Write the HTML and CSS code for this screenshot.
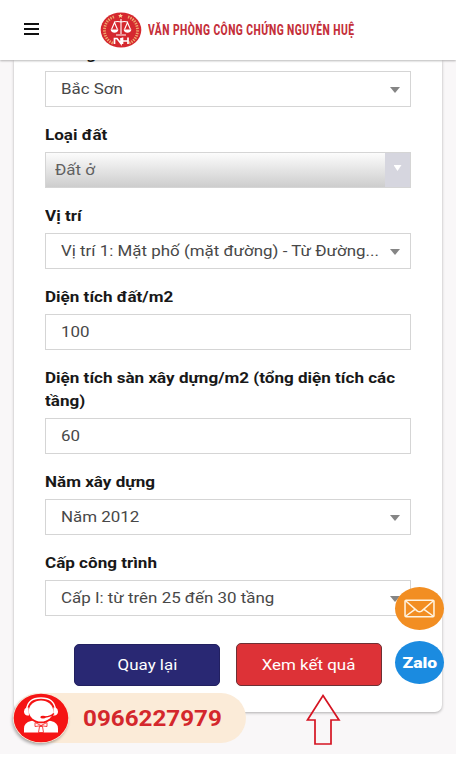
FILE: index.html
```html
<!DOCTYPE html>
<html lang="vi">
<head>
<meta charset="utf-8">
<meta name="viewport" content="width=device-width, initial-scale=1">
<title>Văn phòng công chứng Nguyễn Huệ</title>
<link rel="stylesheet" href="styles.css">
</head>
<body>
<header class="topbar">
  <div class="menu"><i></i><i></i><i></i></div>
  <svg class="logo" viewBox="0 0 42 36">
    <ellipse cx="21" cy="18" rx="20.3" ry="17.6" fill="#d5282f"/>
    <path d="M14 4.800C1.500 9 1.500 27 13 31.200M28 4.800C40.500 9 40.500 27 29 31.200" fill="none" stroke="#eda56b" stroke-width="2.800" stroke-dasharray="1.400 1.100"/>
    <path d="M20.500 1.700l.8 1.400h1.600l-1.200 1.100.4 1.600-1.600-.9-1.600.9.400-1.600-1.200-1.100h1.600z" fill="#ffd09a"/>
    <g fill="none" stroke="#fff" stroke-width="1.100">
      <path d="M21 7v15M16 23h10M14 10q4-1 7 0q3-1 7 0M14.500 10.500l-3 7M14.500 10.500l3 7M27.500 10.500l-3 7M27.500 10.500l3 7"/>
    </g>
    <path d="M10.500 17.500h8q-1 3.300-4 3.300t-4-3.300zM23.500 17.500h8q-1 3.300-4 3.300t-4-3.300z" fill="#fff"/>
    <path d="M14.500 32v-5.500h2.500l4 5v-5.500M22.500 25.500v6.500M22.500 29h5.500M28 25.500v6.500" fill="none" stroke="#fff" stroke-width="1.700"/>
  </svg>
  <div class="brand"><span>VĂN PHÒNG CÔNG CHỨNG NGUYỄN HUỆ</span></div>
</header>
<main class="page">
  <form class="card">
    <div class="label first"><span>Đường</span></div>
    <div class="box"><span>Bắc Sơn</span><b class="caret"></b></div>
    <div class="label"><span>Loại đất</span></div>
    <div class="box native"><span>Đất ở</span><em><b class="caret"></b></em></div>
    <div class="label"><span>Vị trí</span></div>
    <div class="box"><span>Vị trí 1: Mặt phố (mặt đường) - Từ Đường...</span><b class="caret"></b></div>
    <div class="label"><span>Diện tích đất/m2</span></div>
    <div class="box"><span>100</span></div>
    <div class="label"><span>Diện tích sàn xây dựng/m2 (tổng diện tích các<br>tầng)</span></div>
    <div class="box"><span>60</span></div>
    <div class="label"><span>Năm xây dựng</span></div>
    <div class="box"><span>Năm 2012</span><b class="caret"></b></div>
    <div class="label"><span>Cấp công trình</span></div>
    <div class="box"><span>Cấp I: từ trên 25 đến 30 tầng</span><b class="caret"></b></div>
    <div class="actions">
      <div class="btn back"><span>Quay lại</span></div>
      <div class="btn submit"><span>Xem kết quả</span></div>
    </div>
  </form>
</main>
<div class="phone">
  <svg viewBox="0 0 56 50">
    <ellipse cx="28" cy="25" rx="28" ry="25" fill="#fbe5d6"/>
    <ellipse cx="28" cy="25" rx="27.300" ry="24.300" fill="#f51414"/>
    <path d="M11 39.500v-4q0-6 7-7.500l5-1h10l5 1q7 1.500 7 7.500v4z" fill="#fff"/>
    <ellipse cx="28" cy="18" rx="14" ry="12.300" fill="#f51414"/>
    <path d="M13.500 17q1-12 14.500-12t14.500 12" fill="none" stroke="#fff" stroke-width="1.300"/>
    <ellipse cx="28" cy="18" rx="12.200" ry="10.600" fill="#fff"/>
    <path d="M15.500 14.500h-2q-2.500 1-2.500 4t3 4h2zM40.500 14.500h2q2.500 1 2.500 4t-3 4h-2z" fill="#fff"/>
    <path d="M41 20.500q-3 3-9 3.500" fill="none" stroke="#f51414" stroke-width="1.400"/>
    <ellipse cx="30" cy="24.200" rx="2.700" ry="1.400" fill="#f51414"/>
    <path d="M22 29.500l6 3 6-3v4l-6-.8-6 .8zM26.500 33.500h3l1 6h-5z" fill="#fff" stroke="#f51414" stroke-width=".8"/>
  </svg>
  <span>0966227979</span>
</div>
<div class="round mail">
  <svg viewBox="0 0 30 18" fill="none" stroke="#fff3df" stroke-width="1.500" stroke-linejoin="round"><rect x="1" y="1" width="28" height="16" rx="1"/><path d="M1.500 1.500L13 11.500q2 1.300 4 0L28.500 1.500M1.500 16.500l9.500-7M28.500 16.500l-9.500-7"/></svg>
</div>
<div class="round zalo"><span>Zalo</span></div>
<svg class="arrow" viewBox="0 0 36 54"><path d="M18 2.500L34 27h-8v24H10V27H2.500z" fill="none" stroke="#d51422" stroke-width="1.700"/></svg>
</body>
</html>
```
FILE: styles.css
```css
* { box-sizing: border-box; }
body {
  margin: 0;
  height: 757px;
  overflow: hidden;
  background: #fff;
  font-family: Roboto, "Liberation Sans", sans-serif;
  font-size: 15px;
  color: #484848;
}
span { display: inline-block; white-space: nowrap; transform: scaleX(1.128); transform-origin: left center; }
.topbar {
  position: relative;
  z-index: 2;
  display: flex;
  align-items: center;
  height: 60px;
  padding-left: 24px;
  background: #fff;
  box-shadow: 0 1px 2px rgba(0, 0, 0, .28);
}
.menu { display: flex; flex-direction: column; gap: 2.600px; width: 15px; margin-bottom: 2px; }
.menu i { height: 2.200px; background: #111; }
.logo { width: 42px; height: 36px; margin-left: 61px; }
.brand { margin-left: 6px; font-size: 14px; font-weight: 800; letter-spacing: .6px; color: #c5303a; }
.brand span { transform: scaleX(.735); }
.page { height: 694px; padding: 0 14px; background: #f9f7f8; }
.card {
  display: flow-root;
  height: 652px;
  padding: 0 31px;
  background: #fff;
  border-radius: 0 0 7px 7px;
  box-shadow: 0 1px 3px rgba(0, 0, 0, .3);
}
.label { padding: 16.500px 0 5.500px; line-height: 23px; font-weight: 700; color: #181818; }
.label span { transform: scaleX(1.137); }
.label.first { margin-top: -34px; }
.box {
  display: flex;
  align-items: center;
  justify-content: space-between;
  height: 36px;
  padding: 0 10px 0 15px;
  border: 1px solid #d5d5d5;
}
.box > span { margin-top: -1px; }
.caret {
  width: 10px;
  height: 6px;
  margin-top: 2px;
  background: #858585;
  clip-path: polygon(0 0, 100% 0, 50% 100%);
}
.native { padding: 0 0 0 9px; background: linear-gradient(#fcfcfc, #cdcdcd); color: #606060; }
.native > span { margin-top: 0; }
.native em { display: flex; justify-content: center; width: 25px; height: 34px; padding-top: 10px; background: #d6d6df; }
.native .caret { width: 8px; background: #fff; }
.actions { display: flex; gap: 16px; margin-top: 27px; padding-left: 29px; }
.btn { display: flex; align-items: center; justify-content: center; width: 146px; height: 43px; border-radius: 5px; color: #fff; }
.btn span { transform-origin: center; }
.back { height: 42px; margin-top: 1px; background: #292873; border: 1px solid #222060; }
.submit { background: #dd3237; border: 1px solid #6d3034; }
.phone {
  position: absolute;
  z-index: 3;
  left: 13px;
  top: 693px;
  display: flex;
  align-items: center;
  width: 233px;
  height: 50px;
  border-radius: 25px;
  background: #fbebd8;
  font-size: 22px;
  font-weight: 700;
  color: #d4272c;
}
.phone span { transform: scaleX(1.1); }
.phone svg { width: 56px; height: 50px; margin-right: 14px; border-radius: 50%; box-shadow: -1px 2px 3px rgba(0, 0, 0, .3); }
.round {
  position: absolute;
  z-index: 3;
  left: 395px;
  display: flex;
  align-items: center;
  justify-content: center;
  width: 49px;
  height: 43px;
  border-radius: 50%;
}
.mail { top: 587px; background: #f28e22; }
.mail svg { width: 31px; height: 19px; }
.zalo { top: 641px; background: #1b8be0; color: #fff; font-weight: 900; }
.zalo span { transform: scaleX(1.17); transform-origin: center; }
.arrow { position: absolute; z-index: 3; left: 305px; top: 693px; width: 36px; height: 54px; }
```
